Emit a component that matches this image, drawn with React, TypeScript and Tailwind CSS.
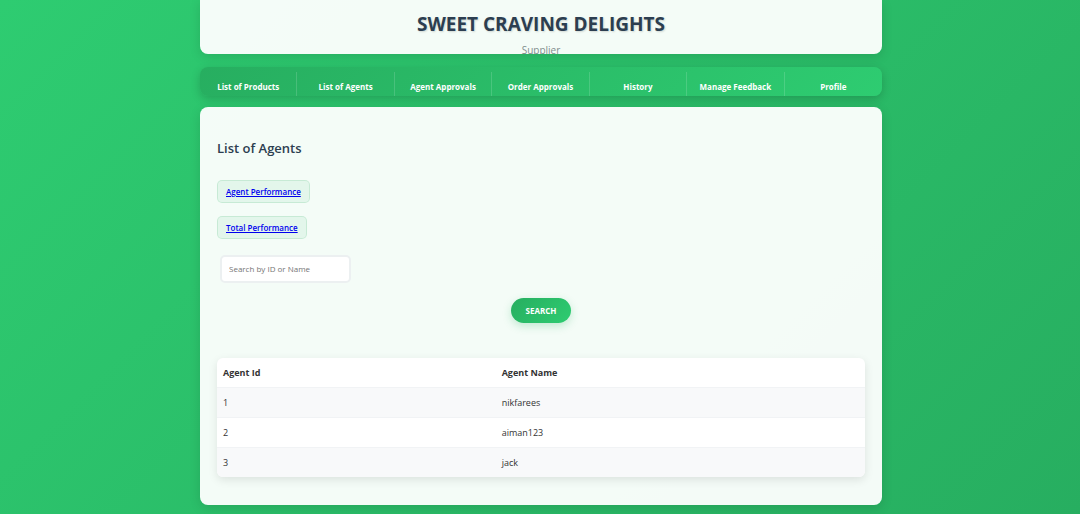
import { useState } from "react";

const links = [
  "List of Products",
  "List of Agents",
  "Agent Approvals",
  "Order Approvals",
  "History",
  "Manage Feedback",
  "Profile",
];

const agents = [
  { id: 1, name: "nikfarees" },
  { id: 2, name: "aiman123" },
  { id: 3, name: "jack" },
];

function Header() {
  return (
    <header className="h-[54px] overflow-hidden rounded-b-lg bg-white/95 pt-2 text-center shadow-[0_3px_12px_rgba(0,0,0,0.12)]">
      <h1 className="text-[19px] leading-8 font-bold text-[#2c3e50] [text-shadow:1px_1px_2px_rgba(0,0,0,0.15)]">
        SWEET CRAVING DELIGHTS
      </h1>
      <p className="text-[10px] leading-5 text-[#7f8c8d]">Supplier</p>
    </header>
  );
}

function Nav() {
  return (
    <nav className="mt-[13px] rounded-lg bg-linear-135 from-[#27ae60] to-[#2ecc71] pt-[5px] shadow-[0_3px_10px_rgba(0,0,0,0.18)]">
      <ul className="grid grid-cols-7">
        {links.map((label) => (
          <li key={label} className="border-r border-white/15 last:border-r-0">
            <a
              href="#"
              className="block pt-[7px] pb-px text-center text-[8px] leading-4 font-bold whitespace-nowrap text-white"
            >
              {label}
            </a>
          </li>
        ))}
      </ul>
    </nav>
  );
}

function ReportLink({ children }: { children: string }) {
  return (
    <a
      href="#"
      className="rounded-[5px] border border-[#27ae60]/15 bg-[#27ae60]/8 px-2 text-[8px] leading-[21px] font-semibold text-[#0000ee] underline"
    >
      {children}
    </a>
  );
}

function SearchForm({ onSearch }: { onSearch: (query: string) => void }) {
  const [query, setQuery] = useState("");
  return (
    <form
      className="mt-4 flex flex-col"
      onSubmit={(event) => {
        event.preventDefault();
        onSearch(query);
      }}
    >
      <input
        type="text"
        aria-label="Search by ID or Name"
        placeholder="Search by ID or Name"
        value={query}
        onChange={(event) => setQuery(event.target.value)}
        className="ml-[3px] h-7 w-[131px] rounded-[5px] border-2 border-[#ecf0f1] bg-white px-[7px] pb-px text-[8px] text-[#333333] outline-none placeholder:text-[#757575]"
      />
      <button
        type="submit"
        className="mt-[15px] h-[25px] w-[60px] self-center rounded-full bg-linear-135 from-[#27ae60] to-[#2ecc71] text-[8px] font-bold text-white shadow-[0_3px_8px_rgba(39,174,96,0.25)]"
      >
        SEARCH
      </button>
    </form>
  );
}

function AgentTable({ query }: { query: string }) {
  const term = query.trim().toLowerCase();
  const rows = agents.filter(
    (agent) => String(agent.id).includes(term) || agent.name.includes(term),
  );
  return (
    <div className="mt-[35px] overflow-hidden rounded-md bg-white shadow-[0_3px_10px_rgba(0,0,0,0.1)]">
      <table className="w-full table-fixed text-left text-[9px] leading-[29px] text-[#333333]">
        <thead>
          <tr className="border-b border-[#f1f3f5]">
            <th className="w-[43%] px-1.5 font-bold">Agent Id</th>
            <th className="px-1.5 font-bold">Agent Name</th>
          </tr>
        </thead>
        <tbody>
          {rows.map((agent) => (
            <tr
              key={agent.id}
              className="border-b border-[#f1f3f5] last:border-b-0 odd:bg-[#f8f9fa]"
            >
              <td className="px-1.5">{agent.id}</td>
              <td className="px-1.5">{agent.name}</td>
            </tr>
          ))}
        </tbody>
      </table>
    </div>
  );
}

export default function App() {
  const [query, setQuery] = useState("");
  return (
    <div className="min-h-screen bg-linear-135 from-[#2ecc71] to-[#27ae60] pb-[9px] pl-0.5 font-['Open_Sans','Noto_Sans',sans-serif]">
      <div className="mx-auto max-w-[682px]">
        <Header />
        <Nav />
        <main className="mt-[11px] rounded-lg bg-white/95 px-[17px] pt-[29px] pb-7 shadow-[0_3px_12px_rgba(0,0,0,0.12)]">
          <h2 className="text-[13px] leading-6 font-semibold text-[#2c3e50]">List of Agents</h2>
          <div className="mt-5 flex flex-col items-start gap-[13px]">
            <ReportLink>Agent Performance</ReportLink>
            <ReportLink>Total Performance</ReportLink>
          </div>
          <SearchForm onSearch={setQuery} />
          <AgentTable query={query} />
        </main>
      </div>
    </div>
  );
}
